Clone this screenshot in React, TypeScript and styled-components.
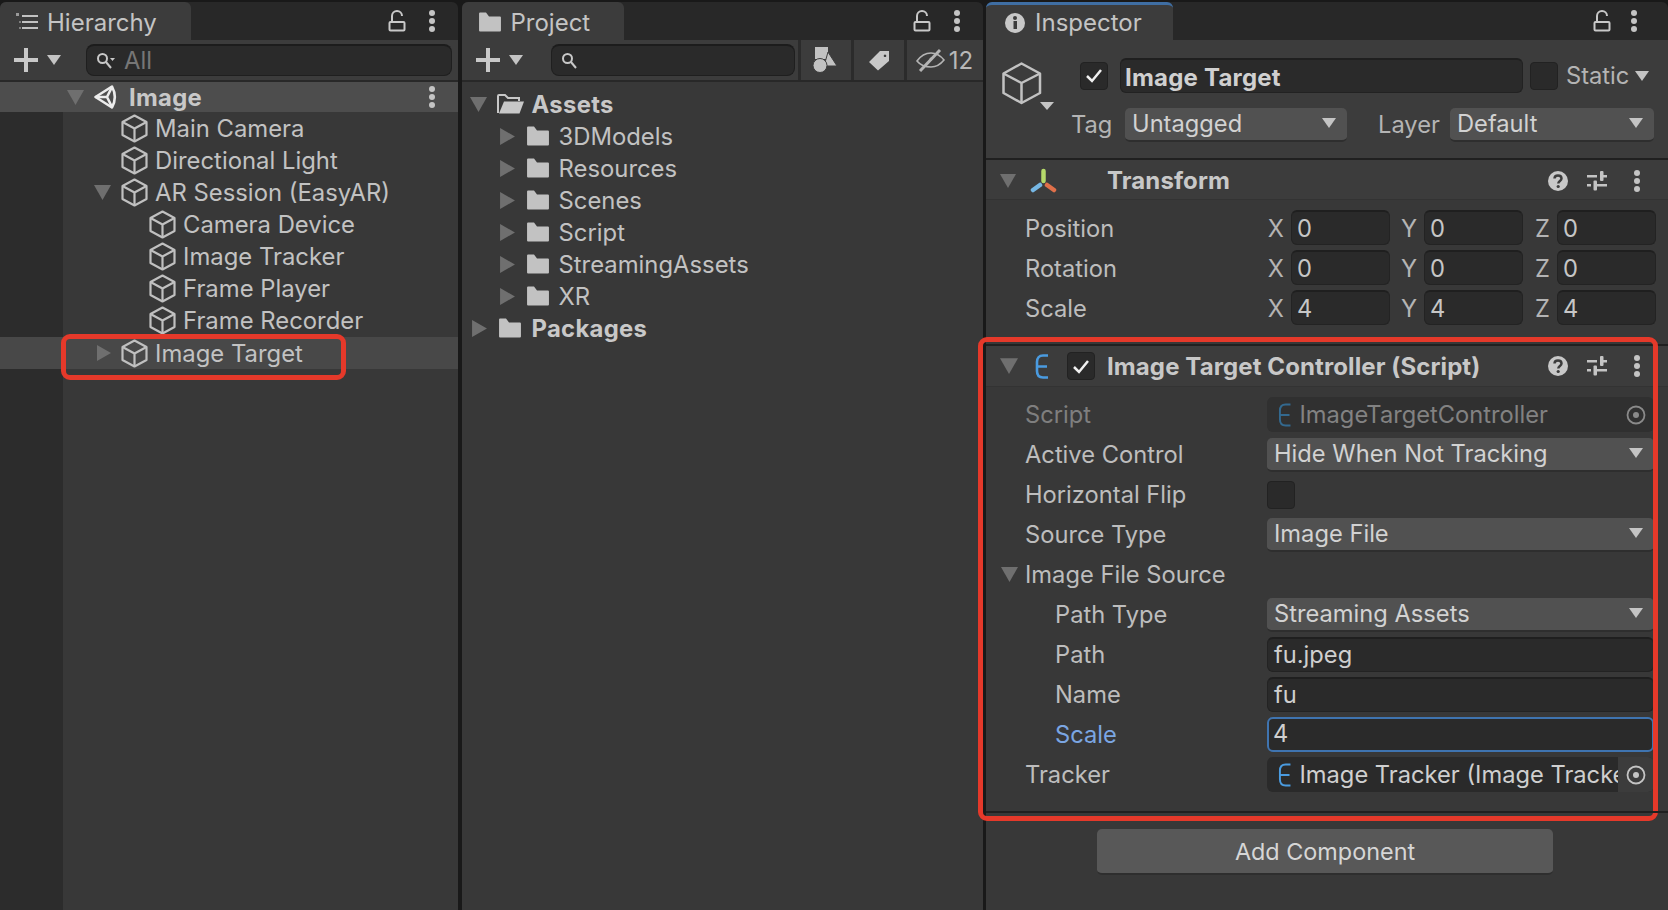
import React from 'react';
import styled, { createGlobalStyle } from 'styled-components';

const GlobalStyle = createGlobalStyle`
  html, body {
    margin: 0;
    height: 100%;
    overflow: hidden;
    background: #191919;
  }
  * { box-sizing: border-box; }
`;

const Page = styled.div`
  width: 1668px;
  height: 910px;
  display: grid;
  grid-template-columns: 458px 521px 682px;
  column-gap: 3.5px;
  font-family: Inter, 'Noto Sans', sans-serif;
  font-size: 23.85px;
  color: #c6c6c6;
  background: #191919;
  overflow: hidden;
`;

const Panel = styled.section`
  display: flex;
  flex-direction: column;
  height: 910px;
  min-width: 0;
  padding-top: 2px;
`;

const TabStrip = styled.div<{ $right?: number }>`
  flex: none;
  height: 38px;
  display: flex;
  align-items: stretch;
  background: #282828;
  border-radius: 6px 6px 0 0;
  padding-right: ${(p) => p.$right ?? 22}px;
`;

const Tab = styled.div<{ $width: number; $left?: number; $active?: boolean }>`
  width: ${(p) => p.$width}px;
  display: flex;
  align-items: center;
  gap: ${(p) => (p.$active ? 10 : 9)}px;
  padding-left: ${(p) => p.$left ?? 16}px;
  padding-top: ${(p) => (p.$active ? 0 : 2)}px;
  background: #3c3c3c;
  border-radius: 6px 6px 0 0;
  font-size: 24px;
  color: #c4c4c4;
  border-top: ${(p) => (p.$active ? '3px solid #3f6ea3' : 'none')};
`;

const TabActions = styled.div<{ $gap?: number }>`
  margin-left: auto;
  display: flex;
  align-items: center;
  gap: ${(p) => p.$gap ?? 22}px;
`;

const Toolbar = styled.div`
  flex: none;
  height: 42px;
  display: flex;
  align-items: center;
  background: #3c3c3c;
  border-bottom: 2px solid #282828;
  padding-left: 14px;
`;

const AddGroup = styled.div<{ $width: number }>`
  display: flex;
  align-items: center;
  gap: 9px;
  width: ${(p) => p.$width}px;
`;

const SearchBox = styled.div<{ $width: number; $after?: number }>`
  width: ${(p) => p.$width}px;
  height: 32px;
  margin-right: ${(p) => p.$after ?? 0}px;
  display: flex;
  align-items: center;
  gap: 9px;
  padding-left: 9px;
  background: #2a2a2a;
  border: 1px solid #1f1f1f;
  border-top: 2px solid #1c1c1c;
  border-radius: 8px;
  color: #767676;
`;

const ToolButton = styled.div<{ $width: number }>`
  width: ${(p) => p.$width}px;
  height: 40px;
  display: flex;
  align-items: center;
  justify-content: center;
  gap: 4px;
  border-left: 3px solid #2b2b2b;
  color: #b8b8b8;
  font-size: 24px;
`;

const TreeList = styled.div<{ $gutter?: boolean; $top: number }>`
  flex: 1;
  padding-top: ${(p) => p.$top}px;
  background: ${(p) =>
    p.$gutter ? 'linear-gradient(to right, #2c2c2c 63px, #383838 63px)' : '#383838'};
`;

const TreeRow = styled.div<{ $indent: number; $tone?: 'scene' | 'hover' }>`
  position: relative;
  height: ${(p) => (p.$tone === 'scene' ? 30 : 32)}px;
  margin-top: ${(p) => (p.$tone === 'hover' ? 1 : 0)}px;
  display: flex;
  align-items: center;
  padding-left: ${(p) => p.$indent}px;
  white-space: nowrap;
  background: ${(p) =>
    p.$tone === 'scene' ? '#4d4d4d' : p.$tone === 'hover' ? '#484848' : 'transparent'};
`;

const ArrowSlot = styled.span<{ $shift?: number }>`
  flex: none;
  width: 27px;
  padding-left: ${(p) => p.$shift ?? 0}px;
  display: flex;
  align-items: center;
`;

const IconSlot = styled.span<{ $after?: number }>`
  flex: none;
  display: flex;
  align-items: center;
  margin-right: ${(p) => p.$after ?? 7}px;
`;

const RowLabel = styled.span<{ $bold?: boolean }>`
  font-weight: ${(p) => (p.$bold ? 700 : 400)};
  letter-spacing: ${(p) => (p.$bold ? '0.3px' : 'normal')};
  color: ${(p) => (p.$bold ? '#c8c8c8' : '#c2c2c2')};
`;

const RowMenu = styled.span`
  margin-left: auto;
  margin-right: 22px;
  display: flex;
`;

const RedFrame = styled.div`
  position: absolute;
  border: 5px solid #e5392a;
  border-radius: 9px;
  pointer-events: none;
`;

const TreeFrame = styled(RedFrame)`
  left: 61px;
  top: -3px;
  width: 285px;
  height: 46px;
`;

const InspectorBody = styled.div`
  flex: 1;
  background: #383838;
  font-size: 23.7px;
`;

const ObjectHeader = styled.div`
  height: 118px;
  display: flex;
  background: #3c3c3c;
`;

const ObjectIcon = styled.div`
  flex: none;
  width: 85px;
  padding: 22px 0 0 16px;
`;

const ObjectFields = styled.div`
  flex: 1;
  display: flex;
  flex-direction: column;
  gap: 14px;
  padding-top: 18px;
`;

const ObjectRow = styled.div`
  height: 35px;
  display: flex;
  align-items: center;
`;

const NameField = styled.div`
  width: 403px;
  height: 35px;
  margin-left: 12px;
  padding: 2px 0 0 4px;
  display: flex;
  align-items: center;
  font-size: 24px;
  font-weight: 700;
  letter-spacing: 0.2px;
  color: #d0d0d0;
  background: #2a2a2a;
  border: 1px solid #222222;
  border-top: 2px solid #1f1f1f;
  border-radius: 6px;
`;

const CheckBox = styled.div<{ $left?: number }>`
  flex: none;
  width: 28px;
  height: 28px;
  margin-left: ${(p) => p.$left ?? 0}px;
  display: flex;
  align-items: center;
  justify-content: center;
  background: #2a2a2a;
  border: 1px solid #222222;
  border-radius: 4px;
`;

const StaticLabel = styled.span`
  margin-left: 8px;
  margin-right: 6px;
  color: #b4b4b4;
`;

const TagLabel = styled.span<{ $width: number; $left?: number }>`
  flex: none;
  width: ${(p) => p.$width}px;
  padding-left: ${(p) => p.$left ?? 0}px;
  color: #b4b4b4;
`;

const DropDown = styled.div<{ $width?: number }>`
  flex: ${(p) => (p.$width ? 'none' : 1)};
  width: ${(p) => (p.$width ? `${p.$width}px` : 'auto')};
  height: 34px;
  display: flex;
  align-items: center;
  justify-content: space-between;
  padding: 0 11px 1px 7px;
  background: #515151;
  border-bottom: 2px solid #2e2e2e;
  border-radius: 5px;
  color: #d2d2d2;
`;

const Component = styled.div`
  position: relative;
  border-top: 2px solid #202020;
  padding-bottom: 19px;
`;

const ComponentFrame = styled(RedFrame)`
  left: -8px;
  right: 10px;
  top: -9px;
  bottom: -10px;
`;

const ComponentHeader = styled.div<{ $height: number; $nudge?: number }>`
  height: ${(p) => p.$height}px;
  display: flex;
  align-items: center;
  background: #3c3c3c;
  border-bottom: 1px solid #333333;
  padding-top: ${(p) => p.$nudge ?? 0}px;
  padding-left: 14px;
  padding-right: 27px;
`;

const HeaderTitle = styled.span`
  font-size: 24px;
  font-weight: 700;
  letter-spacing: 0.1px;
  color: #c8c8c8;
  white-space: nowrap;
`;

const HeaderIcon = styled.span<{ $width: number }>`
  flex: none;
  width: ${(p) => p.$width}px;
  display: flex;
  align-items: center;
`;

const HeaderActions = styled.div`
  margin-left: auto;
  display: flex;
  align-items: center;
  gap: 19px;
`;

const HeaderMenu = styled.span`
  display: flex;
  margin-left: 6px;
`;

const Rows = styled.div`
  display: flex;
  flex-direction: column;
  gap: 5px;
  padding: 10px 14px 0 0;
`;

const PropertyRow = styled.div`
  height: 35px;
  display: flex;
  align-items: center;
`;

const PropertyLabel = styled.span<{ $indent?: number; $tone?: 'dim' | 'focus' }>`
  flex: none;
  width: 281px;
  padding-left: ${(p) => p.$indent ?? 39}px;
  padding-bottom: 1px;
  white-space: nowrap;
  display: flex;
  align-items: center;
  color: ${(p) =>
    p.$tone === 'dim' ? '#7f7f7f' : p.$tone === 'focus' ? '#7ba6e2' : '#bdbdbd'};
`;

const FoldArrow = styled.span`
  width: 24px;
  margin-left: -24px;
  display: flex;
`;

const VectorLabel = styled.span`
  flex: none;
  width: 271px;
  padding: 2px 0 0 39px;
  color: #bdbdbd;
`;

const Axis = styled.span`
  flex: none;
  width: 34px;
  padding: 2px 7px 0 0;
  text-align: right;
  color: #b4b4b4;
`;

const VectorField = styled.div`
  flex: none;
  width: 99px;
  height: 35px;
  padding: 1px 0 0 5px;
  display: flex;
  align-items: center;
  background: #2a2a2a;
  border: 1px solid #232323;
  border-top: 2px solid #1f1f1f;
  border-radius: 6px;
  color: #c6c6c6;
`;

const TextField = styled.div<{ $focus?: boolean }>`
  flex: 1;
  height: 35px;
  padding: 0 0 2px ${(p) => (p.$focus ? 4 : 6)}px;
  display: flex;
  align-items: center;
  background: #2a2a2a;
  color: #cfcfcf;
  border-radius: 6px;
  border: ${(p) => (p.$focus ? '2px solid #3f74b0' : '1px solid #232323')};
  border-top: 2px solid ${(p) => (p.$focus ? '#3f74b0' : '#1f1f1f')};
`;

const ObjectField = styled.div<{ $dim?: boolean }>`
  flex: 1;
  min-width: 0;
  height: 35px;
  display: flex;
  align-items: center;
  padding-left: 11px;
  background: ${(p) => (p.$dim ? '#303030' : '#2a2a2a')};
  border-radius: 6px;
  color: ${(p) => (p.$dim ? '#828282' : '#cfcfcf')};
`;

const ObjectName = styled.span`
  flex: 1;
  min-width: 0;
  margin-left: 8px;
  overflow: hidden;
  white-space: nowrap;
`;

const Picker = styled.span<{ $raised?: boolean }>`
  flex: none;
  width: 36px;
  height: 35px;
  display: flex;
  align-items: center;
  justify-content: center;
  border-radius: 0 6px 6px 0;
  background: ${(p) => (p.$raised ? '#3c3c3c' : 'transparent')};
`;

const AddRow = styled.div`
  display: flex;
  padding: 16px 0 0 111px;
`;

const AddButton = styled.div`
  width: 456px;
  height: 46px;
  display: flex;
  align-items: center;
  justify-content: center;
  background: #585858;
  border-bottom: 2px solid #2e2e2e;
  border-radius: 5px;
  font-size: 23.4px;
  color: #d6d6d6;
`;

const Triangle = ({ dir, size = 17, color = '#6f6f6f' }: { dir: 'down' | 'right'; size?: number; color?: string }) => (
  <svg width={size} height={size} viewBox="0 0 16 16">
    <path d={dir === 'down' ? 'M0 1h16L8 15z' : 'M1 0l14 8-14 8z'} fill={color} />
  </svg>
);

const CubeIcon = () => (
  <svg width="27" height="29" viewBox="0 0 27 29" fill="none" stroke="#c0c0c0" strokeWidth="2.200" strokeLinejoin="round">
    <path d="M13.500 1.500L25.500 8V21L13.500 27.500L1.500 21V8Z" />
    <path d="M1.500 8L13.500 14.500L25.500 8M13.500 14.500V27.500" />
  </svg>
);

const Kebab = ({ color = '#c4c4c4' }: { color?: string }) => (
  <svg width="8" height="22" viewBox="0 0 8 22" fill={color}>
    <circle cx="4" cy="3" r="3" />
    <circle cx="4" cy="11" r="3" />
    <circle cx="4" cy="19" r="3" />
  </svg>
);

const LockIcon = () => (
  <svg width="18" height="22" viewBox="0 0 18 22" fill="none" stroke="#c8c8c8" strokeWidth="2">
    <rect x="1.500" y="12" width="15" height="8.500" rx="1" />
    <path d="M4 12V6a5 5 0 0 1 10 0" />
  </svg>
);

const PlusIcon = () => (
  <svg width="24" height="24" viewBox="0 0 24 24" fill="#c8c8c8">
    <path d="M10 0h4v10h10v4H14v10h-4V14H0v-4h10z" />
  </svg>
);

const SmallArrow = ({ color = '#c4c4c4' }: { color?: string }) => (
  <svg width="14" height="10" viewBox="0 0 14 10">
    <path d="M0 0h14L7 10z" fill={color} />
  </svg>
);

const FolderIcon = ({ size = 24 }: { size?: number }) => (
  <svg width={size} height={size * 0.83} viewBox="0 0 24 20">
    <path d="M1 1.500a1 1 0 0 1 1-1h6l3 4h11a1 1 0 0 1 1 1V18.500a1 1 0 0 1-1 1H2a1 1 0 0 1-1-1z" fill="#c2c2c2" />
  </svg>
);

const OpenFolderIcon = () => (
  <svg width="28" height="20" viewBox="0 0 28 20">
    <path d="M1 19V2a1 1 0 0 1 1-1h6l3 3h11v3" fill="none" stroke="#c8c8c8" strokeWidth="2" />
    <path d="M2 19.500L7 7.500h20l-4.500 12z" fill="#c8c8c8" />
  </svg>
);

const ListIcon = () => (
  <svg width="22" height="18" viewBox="0 0 22 18" fill="#c2c2c2">
    <rect x="6" y="2" width="16" height="2" />
    <rect x="6" y="8" width="16" height="2" />
    <rect x="6" y="14" width="16" height="2" />
    <rect x="0" y="0" width="3" height="3" opacity=".7" />
    <rect x="3" y="8" width="2" height="2" opacity=".5" />
    <rect x="3" y="14" width="2" height="2" opacity=".5" />
  </svg>
);

const UnityIcon = () => (
  <svg width="24" height="26" viewBox="0 0 24 26" fill="none" stroke="#ececec" strokeWidth="2.600" strokeLinejoin="round">
    <path d="M1.500 13L18 2.500C21.500 9 21.500 17 18 23.500Z" />
    <path d="M1.500 13H13L18 3M13 13L18 23" />
  </svg>
);

const SearchGlass = ({ menu }: { menu?: boolean }) => (
  <svg width="19" height="18" viewBox="0 0 19 18" fill="none" stroke="#c8c8c8" strokeWidth="2">
    <circle cx="6.500" cy="6.500" r="4.500" />
    <path d="M10 10l5 6" />
    {menu && <path d="M14 6h5l-2.500 3z" fill="#c8c8c8" stroke="none" />}
  </svg>
);

const ShapesIcon = () => (
  <svg width="25" height="26" viewBox="0 0 25 26" fill="#c2c2c2">
    <rect x="2" y="0" width="13" height="12" />
    <path d="M15 5l9 14H11z" stroke="#3c3c3c" strokeWidth="1" />
    <circle cx="7" cy="18.500" r="7" stroke="#3c3c3c" strokeWidth="1" />
  </svg>
);

const TagIcon = () => (
  <svg width="22" height="21" viewBox="0 0 22 21">
    <path fillRule="evenodd" d="M1 12L12 1h9v10L10 20.500zM17 4.500a1.300 1.300 0 1 0 .01 0z" fill="#c8c8c8" />
  </svg>
);

const EyeSlashIcon = () => (
  <svg width="29" height="24" viewBox="0 0 29 24" fill="none" stroke="#b4b4b4" strokeWidth="1.600">
    <path d="M1 13C6 6 11 5 15 5s9 2 13 7c-4 5-9 7-13 7S5 18 1 13z" />
    <path d="M4 23L24 2" strokeWidth="3" />
    <circle cx="15" cy="11" r="1.500" fill="#b4b4b4" stroke="none" />
  </svg>
);

const InfoIcon = () => (
  <svg width="20" height="20" viewBox="0 0 20 20">
    <circle cx="10" cy="10" r="10" fill="#c8c8c8" />
    <rect x="8.500" y="8" width="3.500" height="8" fill="#3c3c3c" />
    <circle cx="10" cy="5" r="2" fill="#3c3c3c" />
  </svg>
);

const HelpIcon = () => (
  <svg width="20" height="20" viewBox="0 0 20 20">
    <circle cx="10" cy="10" r="10" fill="#c8c8c8" />
    <path d="M6.500 7.500C6.500 5.500 8 4.500 10 4.500s3.500 1 3.500 3c0 2.500-3.200 2.500-3.200 5" fill="none" stroke="#3c3c3c" strokeWidth="2.500" />
    <circle cx="10.200" cy="15.500" r="1.600" fill="#3c3c3c" />
  </svg>
);

const SlidersIcon = () => (
  <svg width="21" height="22" viewBox="0 0 21 22" fill="#c4c4c4">
    <rect x="0" y="5" width="10" height="2.500" />
    <rect x="13" y="1" width="3.500" height="10" rx="1" />
    <rect x="16" y="5" width="4" height="2.500" />
    <rect x="0" y="14" width="4" height="2.500" />
    <rect x="6.500" y="10.500" width="3.500" height="10" rx="1" />
    <rect x="10" y="14" width="10" height="2.500" />
  </svg>
);

const TransformIcon = () => (
  <svg width="27" height="26" viewBox="0 0 27 26" fill="none" strokeWidth="4.500" strokeLinecap="round">
    <path d="M13.500 3v10" stroke="#b5d96a" />
    <path d="M10 17l-7 5" stroke="#76b7e4" />
    <path d="M17 17l7 5" stroke="#e0704a" />
  </svg>
);

const ScriptGlyph = ({ color = '#4a9be0', height = 25, weight = 2 }: { color?: string; height?: number; weight?: number }) => (
  <svg width={height * 0.56} height={height} viewBox="0 0 14 25" fill="none" stroke={color} strokeWidth={weight}>
    <path d="M13 1.500H8C4 1.500 2 4 2 8v9c0 4 2 6.500 6 6.500h5M2 12.500h10" />
  </svg>
);

const CheckMark = () => (
  <svg width="18" height="15" viewBox="0 0 18 15" fill="none" stroke="#f0f0f0" strokeWidth="2.500">
    <path d="M2 8l5 5L16 2" />
  </svg>
);

const TargetIcon = ({ color = '#c4c4c4' }: { color?: string }) => (
  <svg width="20" height="20" viewBox="0 0 20 20">
    <circle cx="10" cy="10" r="8.500" fill="none" stroke={color} strokeWidth="1.800" />
    <circle cx="10" cy="10" r="3" fill={color} />
  </svg>
);

const BigCube = () => (
  <svg width="54" height="50" viewBox="0 0 54 50" fill="none">
    <g stroke="#c2c2c2" strokeWidth="2.500" strokeLinejoin="round">
      <path d="M19.500 1.500L38 11.500V31L19.500 41L1.500 31V11.500Z" />
      <path d="M1.500 11.500L19.500 21L38 11.500M19.500 21V41" />
    </g>
    <path d="M38 40h14l-7 8z" fill="#c4c4c4" />
  </svg>
);

type HierarchyItem = { name: string; indent: number; arrow?: 'down' | 'right'; hover?: boolean };

const hierarchyItems: HierarchyItem[] = [
  { name: 'Main Camera', indent: 94 },
  { name: 'Directional Light', indent: 94 },
  { name: 'AR Session (EasyAR)', indent: 94, arrow: 'down' },
  { name: 'Camera Device', indent: 122 },
  { name: 'Image Tracker', indent: 122 },
  { name: 'Frame Player', indent: 122 },
  { name: 'Frame Recorder', indent: 122 },
  { name: 'Image Target', indent: 94, arrow: 'right', hover: true },
];

const assetFolders = ['3DModels', 'Resources', 'Scenes', 'Script', 'StreamingAssets', 'XR'];

const vectorRows = [
  { label: 'Position', value: '0' },
  { label: 'Rotation', value: '0' },
  { label: 'Scale', value: '4' },
];

const HeaderButtons = () => (
  <HeaderActions>
    <HelpIcon />
    <SlidersIcon />
    <HeaderMenu>
      <Kebab />
    </HeaderMenu>
  </HeaderActions>
);

function App() {
  return (
    <Page>
      <GlobalStyle />

      <Panel>
        <TabStrip>
          <Tab $width={191}>
            <ListIcon />
            Hierarchy
          </Tab>
          <TabActions>
            <LockIcon />
            <Kebab />
          </TabActions>
        </TabStrip>
        <Toolbar>
          <AddGroup $width={72}>
            <PlusIcon />
            <SmallArrow />
          </AddGroup>
          <SearchBox $width={366}>
            <SearchGlass menu />
            All
          </SearchBox>
        </Toolbar>
        <TreeList $gutter $top={0}>
          <TreeRow $indent={67} $tone="scene">
            <ArrowSlot>
              <Triangle dir="down" />
            </ArrowSlot>
            <IconSlot $after={11}>
              <UnityIcon />
            </IconSlot>
            <RowLabel $bold>Image</RowLabel>
            <RowMenu>
              <Kebab />
            </RowMenu>
          </TreeRow>
          {hierarchyItems.map((item) => (
            <TreeRow key={item.name} $indent={item.indent} $tone={item.hover ? 'hover' : undefined}>
              <ArrowSlot $shift={item.hover ? 2 : 0}>
                {item.arrow && <Triangle dir={item.arrow} size={item.hover ? 16 : 17} />}
              </ArrowSlot>
              <IconSlot>
                <CubeIcon />
              </IconSlot>
              <RowLabel>{item.name}</RowLabel>
              {item.hover && <TreeFrame />}
            </TreeRow>
          ))}
        </TreeList>
      </Panel>

      <Panel>
        <TabStrip>
          <Tab $width={162}>
            <FolderIcon />
            Project
          </Tab>
          <TabActions>
            <LockIcon />
            <Kebab />
          </TabActions>
        </TabStrip>
        <Toolbar>
          <AddGroup $width={76}>
            <PlusIcon />
            <SmallArrow />
          </AddGroup>
          <SearchBox $width={244} $after={3}>
            <SearchGlass />
          </SearchBox>
          <ToolButton $width={53}>
            <ShapesIcon />
          </ToolButton>
          <ToolButton $width={53}>
            <TagIcon />
          </ToolButton>
          <ToolButton $width={79}>
            <EyeSlashIcon />
            12
          </ToolButton>
        </Toolbar>
        <TreeList $top={6}>
          <TreeRow $indent={8}>
            <ArrowSlot>
              <Triangle dir="down" />
            </ArrowSlot>
            <IconSlot>
              <OpenFolderIcon />
            </IconSlot>
            <RowLabel $bold>Assets</RowLabel>
          </TreeRow>
          {assetFolders.map((name) => (
            <TreeRow key={name} $indent={37}>
              <ArrowSlot>
                <Triangle dir="right" />
              </ArrowSlot>
              <IconSlot $after={9}>
                <FolderIcon />
              </IconSlot>
              <RowLabel>{name}</RowLabel>
            </TreeRow>
          ))}
          <TreeRow $indent={9}>
            <ArrowSlot>
              <Triangle dir="right" />
            </ArrowSlot>
            <IconSlot $after={10}>
              <FolderIcon />
            </IconSlot>
            <RowLabel $bold>Packages</RowLabel>
          </TreeRow>
        </TreeList>
      </Panel>

      <Panel>
        <TabStrip $right={30}>
          <Tab $width={187} $left={19} $active>
            <InfoIcon />
            Inspector
          </Tab>
          <TabActions $gap={19}>
            <LockIcon />
            <Kebab />
          </TabActions>
        </TabStrip>
        <InspectorBody>
          <ObjectHeader>
            <ObjectIcon>
              <BigCube />
            </ObjectIcon>
            <ObjectFields>
              <ObjectRow>
                <CheckBox $left={9}>
                  <CheckMark />
                </CheckBox>
                <NameField>Image Target</NameField>
                <CheckBox $left={7} />
                <StaticLabel>Static</StaticLabel>
                <SmallArrow />
              </ObjectRow>
              <ObjectRow>
                <TagLabel $width={54}>Tag</TagLabel>
                <DropDown $width={222}>
                  Untagged
                  <SmallArrow />
                </DropDown>
                <TagLabel $width={103} $left={31}>
                  Layer
                </TagLabel>
                <DropDown $width={204}>
                  Default
                  <SmallArrow />
                </DropDown>
              </ObjectRow>
            </ObjectFields>
          </ObjectHeader>

          <Component>
            <ComponentHeader $height={40} $nudge={2}>
              <HeaderIcon $width={30}>
                <Triangle dir="down" size={16} />
              </HeaderIcon>
              <HeaderIcon $width={77}>
                <TransformIcon />
              </HeaderIcon>
              <HeaderTitle>Transform</HeaderTitle>
              <HeaderButtons />
            </ComponentHeader>
            <Rows>
              {vectorRows.map((row) => (
                <PropertyRow key={row.label}>
                  <VectorLabel>{row.label}</VectorLabel>
                  {['X', 'Y', 'Z'].map((axis) => (
                    <React.Fragment key={axis}>
                      <Axis>{axis}</Axis>
                      <VectorField>{row.value}</VectorField>
                    </React.Fragment>
                  ))}
                </PropertyRow>
              ))}
            </Rows>
          </Component>

          <Component>
            <ComponentFrame />
            <ComponentHeader $height={41}>
              <HeaderIcon $width={35}>
                <Triangle dir="down" size={18} />
              </HeaderIcon>
              <HeaderIcon $width={32}>
                <ScriptGlyph weight={2.6} />
              </HeaderIcon>
              <CheckBox>
                <CheckMark />
              </CheckBox>
              <HeaderIcon $width={12} />
              <HeaderTitle>Image Target Controller (Script)</HeaderTitle>
              <HeaderButtons />
            </ComponentHeader>
            <Rows>
              <PropertyRow>
                <PropertyLabel $tone="dim">Script</PropertyLabel>
                <ObjectField $dim>
                  <ScriptGlyph color="#33698f" height={24} />
                  <ObjectName>ImageTargetController</ObjectName>
                  <Picker>
                    <TargetIcon color="#8a8a8a" />
                  </Picker>
                </ObjectField>
              </PropertyRow>
              <PropertyRow>
                <PropertyLabel>Active Control</PropertyLabel>
                <DropDown>
                  Hide When Not Tracking
                  <SmallArrow />
                </DropDown>
              </PropertyRow>
              <PropertyRow>
                <PropertyLabel>Horizontal Flip</PropertyLabel>
                <CheckBox />
              </PropertyRow>
              <PropertyRow>
                <PropertyLabel>Source Type</PropertyLabel>
                <DropDown>
                  Image File
                  <SmallArrow />
                </DropDown>
              </PropertyRow>
              <PropertyRow>
                <PropertyLabel>
                  <FoldArrow>
                    <Triangle dir="down" />
                  </FoldArrow>
                  Image File Source
                </PropertyLabel>
              </PropertyRow>
              <PropertyRow>
                <PropertyLabel $indent={69}>Path Type</PropertyLabel>
                <DropDown>
                  Streaming Assets
                  <SmallArrow />
                </DropDown>
              </PropertyRow>
              <PropertyRow>
                <PropertyLabel $indent={69}>Path</PropertyLabel>
                <TextField>fu.jpeg</TextField>
              </PropertyRow>
              <PropertyRow>
                <PropertyLabel $indent={69}>Name</PropertyLabel>
                <TextField>fu</TextField>
              </PropertyRow>
              <PropertyRow>
                <PropertyLabel $indent={69} $tone="focus">
                  Scale
                </PropertyLabel>
                <TextField $focus>4</TextField>
              </PropertyRow>
              <PropertyRow>
                <PropertyLabel>Tracker</PropertyLabel>
                <ObjectField>
                  <ScriptGlyph height={24} />
                  <ObjectName>Image Tracker (Image Tracker)</ObjectName>
                  <Picker $raised>
                    <TargetIcon />
                  </Picker>
                </ObjectField>
              </PropertyRow>
            </Rows>
          </Component>

          <Component>
            <AddRow>
              <AddButton>Add Component</AddButton>
            </AddRow>
          </Component>
        </InspectorBody>
      </Panel>
    </Page>
  );
}

export default App;
